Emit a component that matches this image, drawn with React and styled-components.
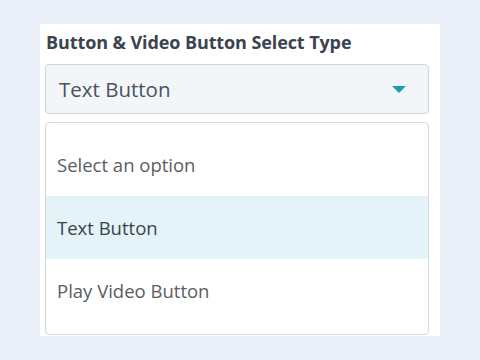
import React from 'react'
import styled, { createGlobalStyle } from 'styled-components'

const Global = createGlobalStyle`
  html, body { margin: 0; padding: 0; background: #ebf0f8; }
  body { font-family: "Open Sans", "Lato", sans-serif; }
`

const Page = styled.div`
  width: 480px;
  height: 360px;
  padding: 24px 0 0 40px;
  box-sizing: border-box;
`

const Panel = styled.div`
  width: 400px;
  height: 312px;
  background: #ffffff;
  padding: 8px 11px 0 5px;
  box-sizing: border-box;
  overflow: hidden;
`

const Label = styled.div`
  font-size: 18px;
  font-weight: 700;
  letter-spacing: -0.1px;
  color: #3b4350;
  padding-left: 1px;
  height: 32px;
  line-height: 20px;
  box-sizing: border-box;
  white-space: nowrap;
`

const Select = styled.div`
  height: 50px;
  box-sizing: border-box;
  border: 1px solid #cdd4dc;
  border-radius: 4px;
  background: #f3f6f9;
  display: flex;
  align-items: center;
  justify-content: space-between;
  padding: 0 22px 0 13px;
  font-size: 20.5px;
  color: #4a5260;
`

const Caret = styled.span`
  width: 0;
  height: 0;
  margin-top: 1px;
  border-left: 7px solid transparent;
  border-right: 7px solid transparent;
  border-top: 7px solid #1f9cb6;
`

const List = styled.div`
  margin-top: 8px;
  height: 213px;
  box-sizing: border-box;
  border: 1px solid #d3d9e0;
  border-radius: 4px;
  padding: 10px 0;
`

const Option = styled.div`
  height: 63px;
  display: flex;
  align-items: center;
  padding-left: 11px;
  font-size: 18.5px;
  color: ${p => (p.active ? '#3a4450' : '#5a5d63')};
  background: ${p => (p.active ? '#e3f3f8' : 'transparent')};
`

export default function App() {
  const options = ['Select an option', 'Text Button', 'Play Video Button']
  return (
    <Page>
      <Global />
      <Panel>
        <Label>Button &amp; Video Button Select Type</Label>
        <Select>
          <span>Text Button</span>
          <Caret />
        </Select>
        <List>
          {options.map(o => (
            <Option key={o} active={o === 'Text Button'}>{o}</Option>
          ))}
        </List>
      </Panel>
    </Page>
  )
}
